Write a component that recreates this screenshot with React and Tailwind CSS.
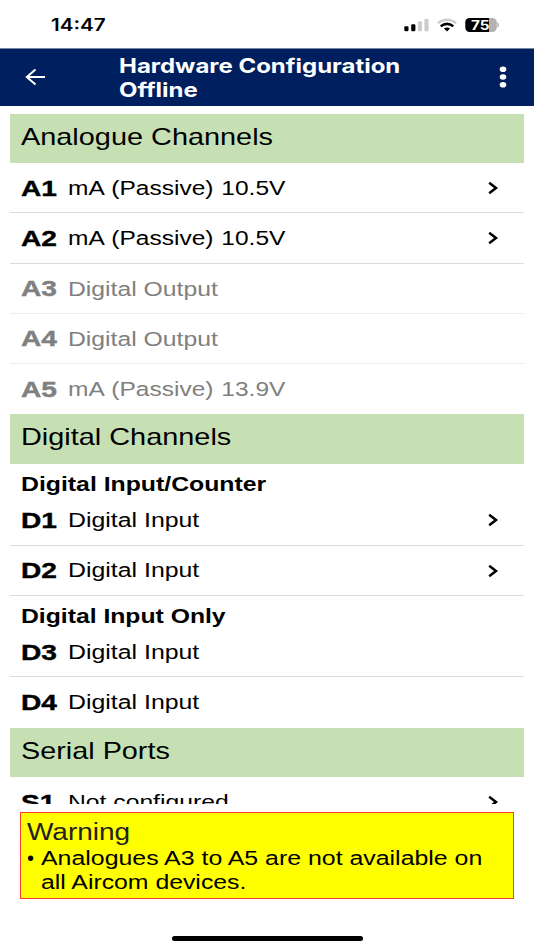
const helv = "font-['Liberation_Sans',Arial,sans-serif]";

function Stretch({ className = "", children }) {
  return <span className={`block origin-left whitespace-nowrap ${className}`}>{children}</span>;
}

function Chevron() {
  return (
    <svg width="12" height="14" viewBox="0 0 12 14" fill="none" className="mr-[24.8px] shrink-0">
      <path d="M2.2 1.8 L9 7 L2.2 12.2" stroke="#000" strokeWidth="2.5" />
    </svg>
  );
}

function Section({ title, scale }) {
  return (
    <div className="h-[49.5px] shrink-0 bg-[#c6e0b4] pl-[10.8px]">
      <Stretch className={`text-[24px] leading-[45.5px] ${scale}`}>{title}</Stretch>
    </div>
  );
}

function SubHeading({ children, scale }) {
  return (
    <div className="h-[31.4px] shrink-0 pt-[10.3px] pl-[10.8px]">
      <Stretch className={`text-[20px] leading-[21px] font-bold ${scale}`}>{children}</Stretch>
    </div>
  );
}

function Row({ id, text, scale, muted, arrow, last }) {
  const tone = muted ? "text-[#808080]" : "text-black";
  const line = last ? "border-transparent" : muted ? "border-[#ececec]" : "border-[#dcdcdc]";
  return (
    <div className={`flex h-[50.25px] shrink-0 items-center border-b pt-[0.6px] pl-[10.8px] ${tone} ${line}`}>
      <div className="w-[47px]">
        <Stretch className="scale-x-[1.25] text-[22.5px] leading-[49px] font-bold [-webkit-text-stroke:0.4px]">{id}</Stretch>
      </div>
      <div className="flex-1 pt-[0.8px]">
        <Stretch className={`text-[20px] leading-[49px] ${scale}`}>{text}</Stretch>
      </div>
      {arrow && <Chevron />}
    </div>
  );
}

function StatusIcons() {
  return (
    <svg width="100" height="20" viewBox="402 15 100 20" className="shrink-0">
      <rect x="404.3" y="26.3" width="4.2" height="5" rx="1.2" fill="#000" />
      <rect x="411.2" y="24.2" width="4.2" height="7.1" rx="1.2" fill="#000" />
      <rect x="417.8" y="21.3" width="4.2" height="10" rx="1.2" fill="#ccc" />
      <rect x="424.4" y="18.7" width="4.2" height="12.6" rx="1.2" fill="#ccc" />
      <g fill="none">
        <path d="M437.8 23.2 Q447 16.2 456.2 23.2" stroke="#ccc" strokeWidth="2.3" />
        <path d="M440.7 26.3 Q447 21.4 453.3 26.3" stroke="#000" strokeWidth="2.5" />
      </g>
      <path d="M443.9 28.6 Q447 26.2 450.1 28.6 L447 31.4 Z" fill="#000" />
      <clipPath id="cell">
        <rect x="465.3" y="18" width="31.5" height="14" rx="4.2" />
      </clipPath>
      <g clipPath="url(#cell)">
        <rect x="465" y="18" width="24" height="14" fill="#000" />
        <rect x="489" y="18" width="8" height="14" fill="#b3b3b3" />
      </g>
      <path d="M497.8 22.8 Q499.6 25 497.8 27.2 Z" fill="#b3b3b3" stroke="#b3b3b3" strokeWidth=".8" />
      <text x="471" y="29.6" fontSize="12.5" fontWeight="700" fill="#fff" textLength="18.5" lengthAdjust="spacingAndGlyphs" className="font-[Inter,sans-serif]">75</text>
    </svg>
  );
}

export default function App() {
  return (
    <div className={`flex h-[950px] w-[534px] flex-col overflow-hidden bg-white text-black ${helv}`}>
      <div className="flex h-[48px] shrink-0 items-start justify-between pr-[32px] pl-[51px]">
        <Stretch className="mt-[15px] scale-x-[1.215] font-[Inter,sans-serif] text-[17px] leading-[20px] font-semibold">14:47</Stretch>
        <div className="mt-[15px]">
          <StatusIcons />
        </div>
      </div>

      <header className="flex h-[57.5px] shrink-0 items-center border-t border-[#7c86a4] bg-[#001f5f] pl-[25px] text-white">
        <svg width="21" height="18" viewBox="0 0 21 18" fill="none" stroke="#fff" strokeWidth="2" className="mb-[1px]">
          <path d="M20 9 H2 M10.5 1.6 L1.8 9 L10.5 16.4" />
        </svg>
        <div className="ml-[73px] flex-1 pt-[1px] font-[Inter,sans-serif] text-[20px] leading-[24px] font-bold">
          <Stretch className="scale-x-[1.198]">Hardware Configuration</Stretch>
          <Stretch className="scale-x-[1.198]">Offline</Stretch>
        </div>
        <svg width="8" height="24" viewBox="0 0 8 24" fill="#fff" className="mr-[27px] mb-[1px]">
          <ellipse cx="4" cy="4.2" rx="3.3" ry="2.8" />
          <ellipse cx="4" cy="12" rx="3.3" ry="2.8" />
          <ellipse cx="4" cy="19.7" rx="3.3" ry="2.8" />
        </svg>
      </header>

      <main className="mx-[10px] mt-[8.2px] flex h-[690.3px] shrink-0 flex-col overflow-hidden">
        <Section title="Analogue Channels" scale="scale-x-[1.203]" />
        <Row id="A1" text="mA (Passive) 10.5V" scale="scale-x-[1.225] [word-spacing:0.9px]" arrow />
        <Row id="A2" text="mA (Passive) 10.5V" scale="scale-x-[1.225] [word-spacing:0.9px]" arrow />
        <Row id="A3" text="Digital Output" scale="scale-x-[1.237]" muted />
        <Row id="A4" text="Digital Output" scale="scale-x-[1.237]" muted />
        <Row id="A5" text="mA (Passive) 13.9V" scale="scale-x-[1.225] [word-spacing:0.9px]" muted last />
        <Section title="Digital Channels" scale="scale-x-[1.203]" />
        <SubHeading scale="scale-x-[1.24]">Digital Input/Counter</SubHeading>
        <Row id="D1" text="Digital Input" scale="scale-x-[1.243]" arrow />
        <Row id="D2" text="Digital Input" scale="scale-x-[1.243]" arrow />
        <SubHeading scale="scale-x-[1.236]">Digital Input Only</SubHeading>
        <Row id="D3" text="Digital Input" scale="scale-x-[1.243]" />
        <Row id="D4" text="Digital Input" scale="scale-x-[1.243]" last />
        <Section title="Serial Ports" scale="scale-x-[1.2]" />
        <Row id="S1" text="Not configured" scale="scale-x-[1.235]" arrow />
      </main>

      <section className="mx-[20px] mt-[8px] h-[87px] shrink-0 border border-[#ff3b30] bg-[#ffff00] pt-[5px] pl-[6px]">
        <Stretch className="scale-x-[1.19] text-[23.5px] leading-[28px] text-[#222]">Warning</Stretch>
        <ul className="text-[20px] leading-[24px]">
          <li className="flex">
            <span className="w-[14px]">•</span>
            <div>
              <Stretch className="scale-x-[1.244]">Analogues A3 to A5 are not available on</Stretch>
              <Stretch className="scale-x-[1.24]">all Aircom devices.</Stretch>
            </div>
          </li>
        </ul>
      </section>

      <div className="mt-[37px] h-[5px] w-[191px] shrink-0 self-center rounded-full bg-black" />
    </div>
  );
}
